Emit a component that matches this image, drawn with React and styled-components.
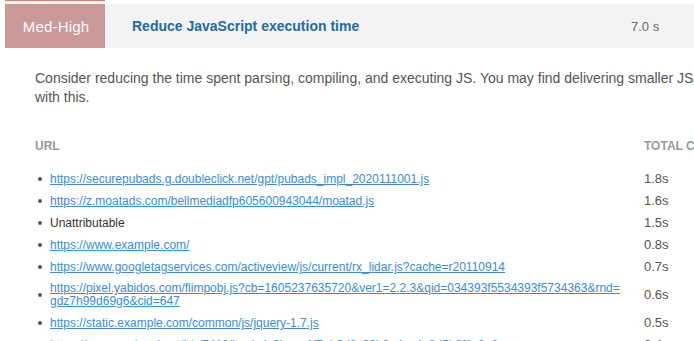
import React from 'react';
import styled, { createGlobalStyle } from 'styled-components';

const GlobalStyle = createGlobalStyle`
   html, body {
      margin:0;
      padding:0;
      background:#fff;
      overflow:hidden;
   }
   body {
      font-family:"Liberation Sans", Arial, sans-serif;
   }
`;

const Page = styled.div`
   width:860px;
   padding:0 0 0 5px;
`;

const TopLine = styled.div`
   width:100px;
   height:1px;
   background-color:#e8776b;
   margin-bottom:3px;
`;

const Header = styled.div`
   display:flex;
   align-items:stretch;
   height:44px;
   background-color:#f3f3f3;
`;

const Badge = styled.div`
   width:100px;
   display:flex;
   align-items:center;
   justify-content:center;
   padding-left:2px;
   box-sizing:border-box;
   background-color:#cc9999;
   color:#fff;
   font-family:"Liberation Sans", Arial, sans-serif;
   font-size:15px;
   letter-spacing:0.2px;
`;

const Title = styled.div`
   flex:1;
   display:flex;
   align-items:center;
   padding-left:27px;
   font-size:14px;
   font-weight:bold;
   color:#246aa2;
`;

const Score = styled.div`
   width:60px;
   display:flex;
   align-items:center;
   font-size:13px;
   color:#666;
   margin-right:${p => p.$offset}px;
`;

const Body = styled.div`
   padding:21px 0 0 30px;
`;

const Description = styled.p`
   margin:0;
   width:770px;
   font-size:14px;
   line-height:19px;
   color:#555;
`;

const Table = styled.div`
   margin-top:30px;
`;

const HeadRow = styled.div`
   display:flex;
   font-size:12px;
   font-weight:bold;
   color:#999;
   text-transform:uppercase;
   height:18px;
   align-items:center;
   margin-bottom:13px;
`;

const UrlCol = styled.div`
   width:609px;
   flex-shrink:0;
`;

const TimeCol = styled.div`
   white-space:nowrap;
`;

const List = styled.ul`
   margin:0;
   padding:0 0 0 15px;
`;

const Item = styled.li`
   display:flex;
   align-items:center;
   padding:4px 0;
   font-size:12px;
   line-height:14px;
   color:#333;
   position:relative;

   &::before{
      content:'';
      position:absolute;
      left:-12px;
      top:50%;
      width:4px;
      height:4px;
      margin-top:-2px;
      border-radius:50%;
      background-color:#555;
   }
`;

const ItemUrl = styled.div`
   width:594px;
   flex-shrink:0;
   padding-right:20px;
   box-sizing:border-box;
   line-height:${p => (p.$wrapped ? '13px' : '14px')};
`;

const Link = styled.a`
   color:#3a8cdc;
   text-decoration:underline;
`;

const Part = styled.span`
   white-space:nowrap;
`;

const Time = styled.div`
   font-size:13px;
   color:#555;
   white-space:nowrap;
`;

const rows = [
   { url:'https://securepubads.g.doubleclick.net/gpt/pubads_impl_2020111001.js', time:'1.8s' },
   { url:'https://z.moatads.com/bellmediadfp605600943044/moatad.js', time:'1.6s' },
   { text:'Unattributable', time:'1.5s' },
   { url:'https://www.example.com/', time:'0.8s' },
   { url:'https://www.googletagservices.com/activeview/js/current/rx_lidar.js?cache=r20110914', time:'0.7s' },
   { parts:['https://pixel.yabidos.com/flimpobj.js?cb=1605237635720&ver1=2.2.3&qid=034393f5534393f5734363&rnd=', 'gdz7h99d69g6&cid=647'], time:'0.6s' },
   { url:'https://static.example.com/common/js/jquery-1.7.js', time:'0.5s' },
   { url:'https://tags.crwdcntrl.net/lt/c/7410/lt.min.js?b=aa1f5ab9d8c00b9a4ec4e2d5b8f1c9a2', time:'0.4s' },
];

function Row({ row }) {
   let content;
   if (row.text) {
      content = row.text;
   } else if (row.parts) {
      content = (
         <Link href="#">
            <Part>{row.parts[0]}</Part><wbr /><Part>{row.parts[1]}</Part>
         </Link>
      );
   } else {
      content = <Link href="#">{row.url}</Link>;
   }
   return (
      <Item>
         <ItemUrl $wrapped={!!row.parts}>{content}</ItemUrl>
         <Time>{row.time}</Time>
      </Item>
   );
}

export default function App() {
   return (
      <>
         <GlobalStyle />
         <Page>
            <TopLine />
            <Header>
               <Badge>Med-High</Badge>
               <Title>Reduce JavaScript execution time</Title>
               <Score $offset={174}>7.0 s</Score>
            </Header>
            <Body>
               <Description>
                  Consider reducing the time spent parsing, compiling, and executing JS. You may find delivering smaller JS payloads helps with this.
               </Description>
               <Table>
                  <HeadRow>
                     <UrlCol>URL</UrlCol>
                     <TimeCol>Total CPU Time</TimeCol>
                  </HeadRow>
                  <List>
                     {rows.map((row, i) => <Row key={i} row={row} />)}
                  </List>
               </Table>
            </Body>
         </Page>
      </>
   );
}
